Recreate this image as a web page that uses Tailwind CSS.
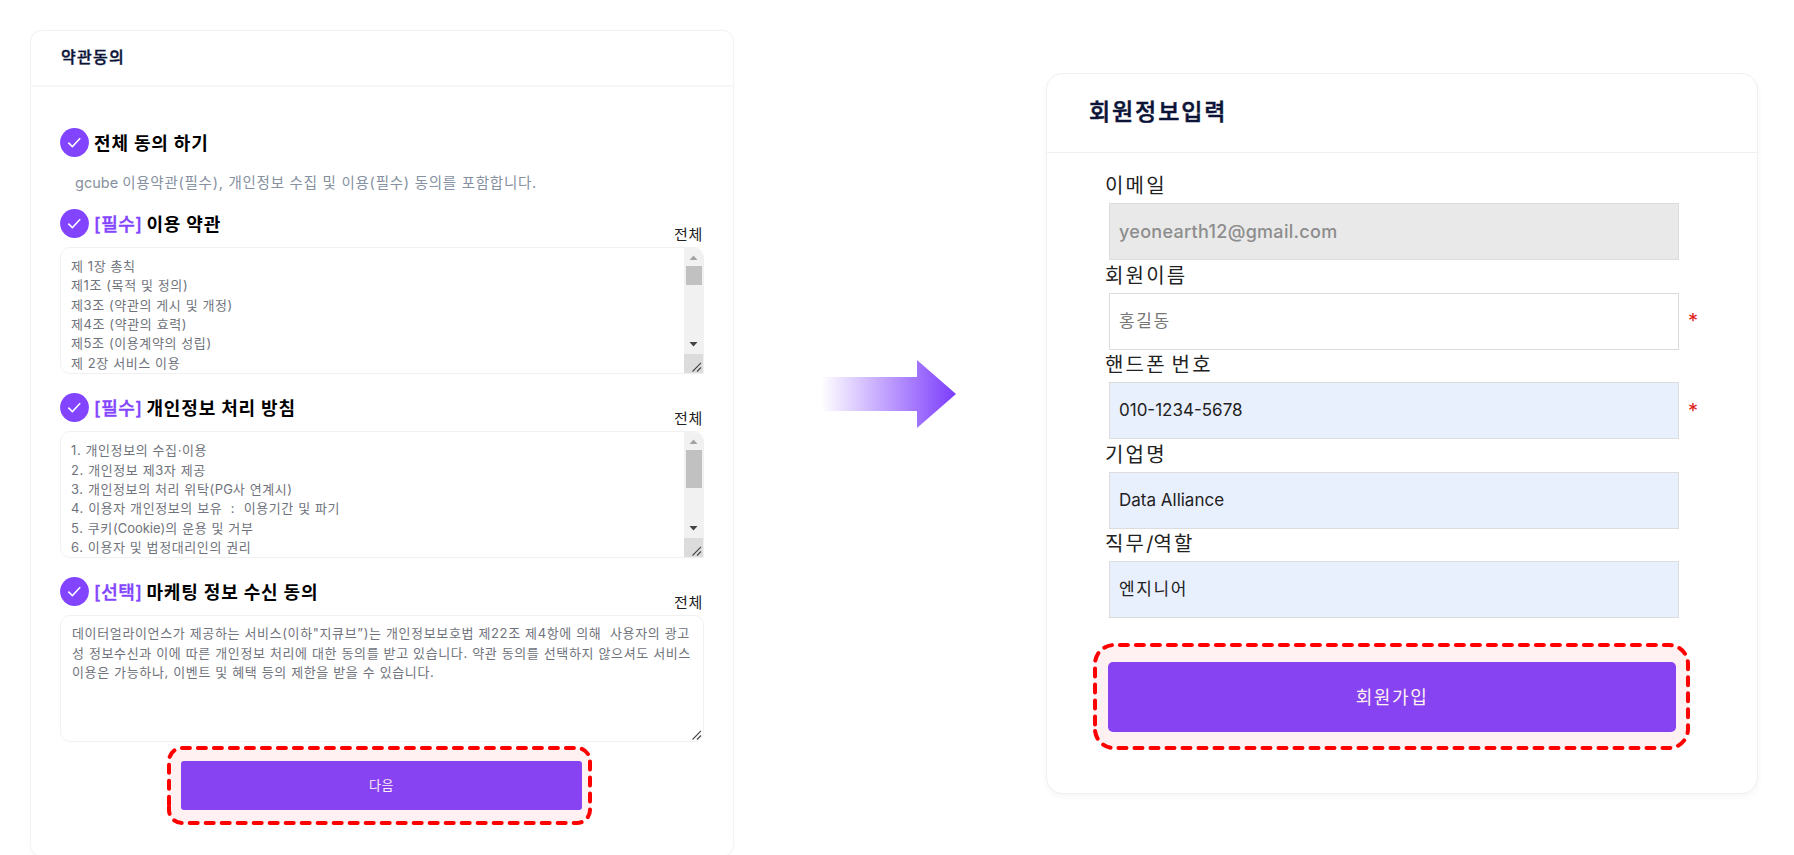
<!DOCTYPE html>
<html lang="ko">
<head>
<meta charset="utf-8">
<title>gcube 회원가입</title>
<script src="https://cdn.jsdelivr.net/npm/@tailwindcss/browser@4"></script>
</head>
<body class="bg-white">
<svg class="hidden">
  <defs>
    <symbol id="check" viewBox="0 0 29 29"><circle cx="14.5" cy="14.5" r="14.4" fill="#8244ff"/><path d="M8.3 14.6 12.4 18.6 20.2 10.3" fill="none" stroke="#fff" stroke-width="1.5"/></symbol>
    <symbol id="grip" viewBox="0 0 10 10"><path d="M.5 9.500 9 .8M5 9.500 9 5.500" fill="none" stroke="#444" stroke-width="1.1"/></symbol>
  </defs>
</svg>
<main class="flex h-[855px] w-[1794px] items-start overflow-hidden font-['Inter','Noto_Sans_CJK_KR',sans-serif]">

  <section class="mt-[30px] ml-[30px] h-[827px] w-[704px] shrink-0 rounded-[12px] border border-[#f3f3f5] bg-white shadow-[0_0_2px_rgba(0,0,0,0.04)]">
    <header class="flex h-[56px] items-center border-b-2 border-[#f7f7f9] pb-[2px] pl-[30px]">
      <h1 class="text-[16px] leading-none font-medium tracking-[1.3px] text-[#0b1437] [-webkit-text-stroke:0.4px_#0b1437]">약관동의</h1>
    </header>
    <div class="pt-[41px] pr-[29px] pl-[29px]">
      <div class="flex h-[29px] items-center gap-[5px]">
        <svg class="size-[29px]"><use href="#check"/></svg>
        <h2 class="pt-[2px] text-[18px] leading-none font-bold tracking-[0.85px] text-black">전체 동의 하기</h2>
      </div>
      <p class="flex h-[52px] items-center pl-[15px] text-[14.500px] leading-none tracking-[0.74px] whitespace-pre text-[#8590a0]"><span class="tracking-normal">gcube </span>이용약관(필수), 개인정보 수집 및 이용(필수) 동의를 포함합니다.</p>

      <div class="h-[184.200px]">
        <div class="flex h-[38px] items-start">
          <svg class="mr-[5px] size-[29px]"><use href="#check"/></svg>
          <h2 class="flex h-[29px] items-center gap-[4px] pt-[2px] text-[18px] leading-none font-bold tracking-[0.85px] text-black"><span class="font-medium tracking-[0.5px] text-[#8244ff] [-webkit-text-stroke:0.4px_#8244ff]">[필수]</span>이용 약관</h2>
          <span class="ml-auto pt-[18px] pr-[1px] text-[15px] leading-none tracking-[0.7px] text-[#222]">전체</span>
        </div>
        <div class="flex h-[127px] overflow-hidden rounded-l-[10px] rounded-tr-[10px] border border-[#f1f1f4]">
          <div class="flex-1 pt-[9px] pl-[10px] text-[13px] leading-[19.330px] tracking-[0.6px] whitespace-pre text-[#70737c]"><p>제 1장 총칙</p><p>제1조 (목적 및 정의)</p><p>제3조 (약관의 게시 및 개정)</p><p>제4조 (약관의 효력)</p><p>제5조 (이용계약의 성립)</p><p>제 2장 서비스 이용</p></div>
          <div class="flex w-[19px] flex-col bg-[#f1f1f1]">
            <svg class="h-[18px] w-[19px]" viewBox="0 0 19 18"><path d="M5.500 12 9.500 7.500 13.500 12z" fill="#a3a3a3"/></svg>
            <div class="ml-[2px] h-[19px] w-[16px] bg-[#c1c1c1]"></div>
            <svg class="mt-auto h-[18px] w-[19px]" viewBox="0 0 19 18"><path d="M5.500 6 9.500 10.500 13.500 6z" fill="#444"/></svg>
            <div class="flex h-[19px] items-end justify-end bg-[#dcdcdc] p-px"><svg class="size-[10px]"><use href="#grip"/></svg></div>
          </div>
        </div>
      </div>

      <div class="h-[184.200px]">
        <div class="flex h-[38px] items-start">
          <svg class="mr-[5px] size-[29px]"><use href="#check"/></svg>
          <h2 class="flex h-[29px] items-center gap-[4px] pt-[2px] text-[18px] leading-none font-bold tracking-[0.85px] text-black"><span class="font-medium tracking-[0.5px] text-[#8244ff] [-webkit-text-stroke:0.4px_#8244ff]">[필수]</span>개인정보 처리 방침</h2>
          <span class="ml-auto pt-[18px] pr-[1px] text-[15px] leading-none tracking-[0.7px] text-[#222]">전체</span>
        </div>
        <div class="flex h-[127px] overflow-hidden rounded-l-[10px] rounded-tr-[10px] border border-[#f1f1f4]">
          <div class="flex-1 pt-[9px] pl-[10px] text-[13px] leading-[19.330px] tracking-[0.6px] whitespace-pre text-[#70737c]"><p>1. 개인정보의 수집·이용</p><p>2. 개인정보 제3자 제공</p><p>3. 개인정보의 처리 위탁(<span class="tracking-normal">PG</span>사 연계시)</p><p>4. 이용자 개인정보의 보유  :  이용기간 및 파기</p><p>5. 쿠키<span class="tracking-normal">(Cookie)</span>의 운용 및 거부</p><p>6. 이용자 및 법정대리인의 권리</p></div>
          <div class="flex w-[19px] flex-col bg-[#f1f1f1]">
            <svg class="h-[18px] w-[19px]" viewBox="0 0 19 18"><path d="M5.500 12 9.500 7.500 13.500 12z" fill="#a3a3a3"/></svg>
            <div class="ml-[2px] h-[38px] w-[16px] bg-[#c1c1c1]"></div>
            <svg class="mt-auto h-[18px] w-[19px]" viewBox="0 0 19 18"><path d="M5.500 6 9.500 10.500 13.500 6z" fill="#444"/></svg>
            <div class="flex h-[19px] items-end justify-end bg-[#dcdcdc] p-px"><svg class="size-[10px]"><use href="#grip"/></svg></div>
          </div>
        </div>
      </div>

      <div class="h-[165px]">
        <div class="flex h-[38px] items-start">
          <svg class="mr-[5px] size-[29px]"><use href="#check"/></svg>
          <h2 class="flex h-[29px] items-center gap-[4px] pt-[2px] text-[18px] leading-none font-bold tracking-[0.85px] text-black"><span class="font-medium tracking-[0.5px] text-[#8244ff] [-webkit-text-stroke:0.4px_#8244ff]">[선택]</span>마케팅 정보 수신 동의</h2>
          <span class="ml-auto pt-[18px] pr-[1px] text-[15px] leading-none tracking-[0.7px] text-[#222]">전체</span>
        </div>
        <div class="flex h-[127px] items-end rounded-[10px] border border-[#f1f1f4]">
          <div class="flex-1 self-start pt-[8px] pl-[11px] text-[13px] leading-[19.330px] tracking-[0.640px] whitespace-pre text-[#70737c]"><p>데이터얼라이언스가 제공하는 서비스(이하"지큐브”)는 개인정보보호법 제22조 제4항에 의해  사용자의 광고</p><p>성 정보수신과 이에 따른 개인정보 처리에 대한 동의를 받고 있습니다. 약관 동의를 선택하지 않으셔도 서비스</p><p>이용은 가능하나, 이벤트 및 혜택 등의 제한을 받을 수 있습니다.</p></div>
          <svg class="mr-px mb-px -ml-[20px] size-[10px] shrink-0"><use href="#grip"/></svg>
        </div>
      </div>

      <div class="relative mt-[4px] ml-[107px] flex h-[79px] w-[425px] items-center pl-[14px]">
        <button class="h-[49px] w-[401px] rounded-[3px] bg-[#8147ff] text-[13px] leading-none tracking-[0.5px] text-white">다음</button>
        <svg class="absolute inset-0 h-[79px] w-[425px]" viewBox="0 0 425 79"><path d="M2 58.800V15A13 13 0 0 1 15 2H410A13 13 0 0 1 423 15V64A13 13 0 0 1 410 77H15A13 13 0 0 1 2 64V58.800" fill="#f00" fill-opacity=".055" stroke="#f00" stroke-width="4" stroke-linecap="round" stroke-dasharray="8 8"/></svg>
      </div>
    </div>
  </section>

  <svg class="mt-[359px] ml-[87px] h-[70px] w-[136px] shrink-0" viewBox="0 0 136 70">
    <defs><linearGradient id="fade" x1="0" x2="1" y1="0" y2="0"><stop offset="0" stop-color="#fff"/><stop offset="1" stop-color="#7c3cfc"/></linearGradient></defs>
    <path d="M0 18H96V1L135 35 96 69V52H0z" fill="url(#fade)"/>
  </svg>

  <section class="mt-[73px] ml-[89px] h-[721px] w-[712px] shrink-0 rounded-[17px] border border-[#f0f0f2] bg-white shadow-[0_3px_6px_rgba(0,0,0,0.04)]">
    <header class="flex h-[79px] items-center border-b border-[#f0f0f2] pb-[2px] pl-[42px]">
      <h1 class="text-[23px] leading-none font-medium tracking-[1.9px] text-[#0b1437] [-webkit-text-stroke:0.5px_#0b1437]">회원정보입력</h1>
    </header>
    <form class="pt-[18px] pl-[58px] text-[17px] leading-none text-[#222]">
      <div class="h-[89.600px]">
        <label class="flex h-[32px] items-center pb-[2px] text-[20px] leading-none tracking-[2.2px]">이메일</label>
        <div class="ml-[4px] flex h-[57px] w-[570px] items-center border border-[#dcdcdf] bg-[#e9e9e9] pl-[9px] text-[18px] font-medium tracking-[0.3px] text-[#8d8d8d]">yeonearth12@gmail.com</div>
      </div>
      <div class="h-[89.600px]">
        <label class="flex h-[32px] items-center pb-[2px] text-[20px] leading-none tracking-[2.2px]">회원이름</label>
        <div class="flex items-center"><div class="ml-[4px] flex h-[57px] w-[570px] items-center border border-[#dcdcdf] bg-white pl-[9px] text-[17px] tracking-[1.600px] text-[#777]">홍길동</div><span class="pl-[9px] text-[20px] text-[#e02020]">*</span></div>
      </div>
      <div class="h-[89.600px]">
        <label class="flex h-[32px] items-center pb-[2px] text-[20px] leading-none tracking-[2.2px] [word-spacing:-3px]">핸드폰 번호</label>
        <div class="flex items-center"><div class="ml-[4px] flex h-[57px] w-[570px] items-center border border-[#dcdcdf] bg-[#e8effd] pl-[9px]">010-1234-5678</div><span class="pl-[9px] text-[20px] text-[#e02020]">*</span></div>
      </div>
      <div class="h-[89.600px]">
        <label class="flex h-[32px] items-center pb-[2px] text-[20px] leading-none tracking-[2.2px]">기업명</label>
        <div class="ml-[4px] flex h-[57px] w-[570px] items-center border border-[#dcdcdf] bg-[#e8effd] pl-[9px]">Data Alliance</div>
      </div>
      <div class="h-[89.600px]">
        <label class="flex h-[32px] items-center pb-[2px] text-[20px] leading-none tracking-[2.2px]">직무<span class="tracking-normal">/</span>역할</label>
        <div class="ml-[4px] flex h-[57px] w-[570px] items-center border border-[#dcdcdf] bg-[#e8effd] pl-[9px] text-[17px] tracking-[1.600px]">엔지니어</div>
      </div>
      <div class="relative mt-[24.500px] ml-[-12px] flex h-[107px] w-[597px] items-center pl-[15px]">
        <button type="button" class="h-[70px] w-[568px] rounded-[5px] bg-[#8147ff] pt-[3px] text-[18px] leading-none tracking-[1.600px] text-white">회원가입</button>
        <svg class="absolute inset-0 h-[107px] w-[597px]" viewBox="0 0 597 107"><path d="M2 81.500V21A19 19 0 0 1 21 2H576A19 19 0 0 1 595 21V86A19 19 0 0 1 576 105H21A19 19 0 0 1 2 86V81.500" fill="#f00" fill-opacity=".055" stroke="#f00" stroke-width="4" stroke-linecap="round" stroke-dasharray="8 8"/></svg>
      </div>
    </form>
  </section>
</main>
</body>
</html>
